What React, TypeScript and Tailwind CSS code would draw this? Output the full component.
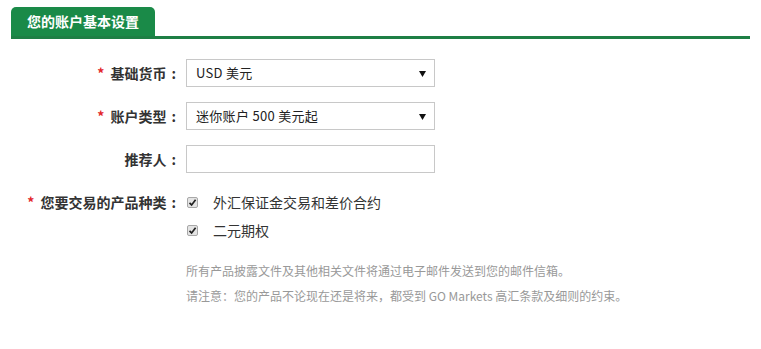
import React from 'react';

const font = { fontFamily: '"Noto Sans CJK SC", "Noto Sans", sans-serif' };

const Label: React.FC<{ text: string; required?: boolean }> = ({ text, required }) => (
  <div className="w-[165px] shrink-0 text-right text-[14px] font-bold text-[#333]">
    {required && <span className="text-[#e3262a] mr-[6px]">*</span>}
    {text}
    <span className="ml-[5px]">:</span>
  </div>
);

const SelectBox: React.FC<{ value: string }> = ({ value }) => (
  <div className="w-[249px] h-[28px] border border-[#c8c8c8] bg-white flex items-center justify-between pl-[9px] pr-[7px] text-[13px] text-[#222]">
    <span className="tracking-[0.3px]">{value}</span>
    <svg width="7" height="7" viewBox="0 0 7 7" className="mr-[1px]">
      <polygon points="0,1 7,1 3.5,7" fill="#111" />
    </svg>
  </div>
);

const Check: React.FC<{ label: string }> = ({ label }) => (
  <div className="flex items-center h-[28px]">
    <div className="w-[11px] h-[11px] ml-[1px] rounded-[2px] border border-[#a8a8a8] bg-[#e4e4e4] flex items-center justify-center">
      <svg width="9" height="9" viewBox="0 0 9 9">
        <path d="M1.5 4.8 L3.6 6.9 L7.6 1.8" stroke="#222" strokeWidth="1.7" fill="none" />
      </svg>
    </div>
    <span className="ml-[15px] text-[14px] text-[#333]">{label}</span>
  </div>
);

export default function App() {
  return (
    <div className="w-[761px] h-[349px] bg-white pt-[7px] px-[11px]" style={font}>
      <div className="flex border-b-[3px] border-[#1e7f45]">
        <div className="w-[144px] h-[29px] bg-[#1a8a48] rounded-t-[5px] flex items-center pl-[16px] text-white text-[14px] font-bold">
          您的账户基本设置
        </div>
      </div>

      <div className="mt-[20px] flex flex-col gap-[15px]">
        <div className="flex items-center gap-[10px]">
          <Label text="基础货币" required />
          <SelectBox value="USD 美元" />
        </div>
        <div className="flex items-center gap-[10px]">
          <Label text="账户类型" required />
          <SelectBox value="迷你账户 500 美元起" />
        </div>
        <div className="flex items-center gap-[10px]">
          <Label text="推荐人" />
          <div className="w-[249px] h-[28px] border border-[#c8c8c8] bg-white" />
        </div>
      </div>

      <div className="mt-[15px] flex items-start gap-[10px]">
        <div className="h-[28px] flex items-center">
          <Label text="您要交易的产品种类" required />
        </div>
        <div className="flex flex-col">
          <Check label="外汇保证金交易和差价合约" />
          <Check label="二元期权" />
        </div>
      </div>

      <div className="ml-[175px] mt-[14px] text-[12px] text-[#999] leading-[25px]">
        <p>所有产品披露文件及其他相关文件将通过电子邮件发送到您的邮件信箱。</p>
        <p>请注意：您的产品不论现在还是将来，都受到 GO Markets 高汇条款及细则的约束。</p>
      </div>
    </div>
  );
}
